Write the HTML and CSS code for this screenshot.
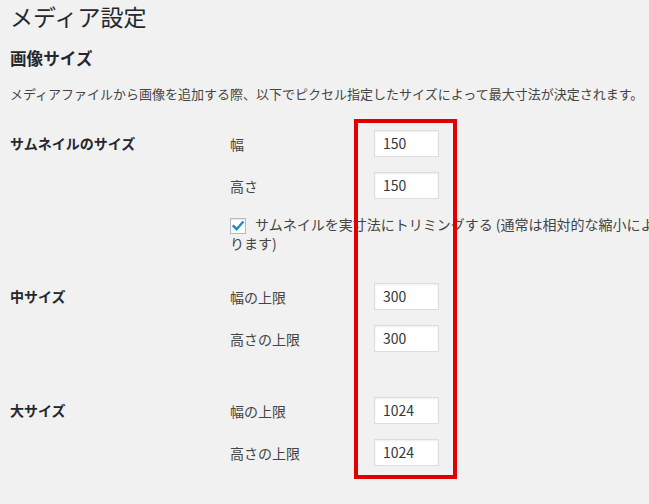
FILE: index.html
```html
<!DOCTYPE html>
<html lang="ja">
<head>
<meta charset="utf-8">
<title>メディア設定</title>
<link rel="stylesheet" href="styles.css">
</head>
<body>
<div class="wrap">
  <h1 class="title">メディア設定</h1>
  <h2 class="subtitle">画像サイズ</h2>
  <p class="desc">メディアファイルから画像を追加する際、以下でピクセル指定したサイズによって最大寸法が決定されます。</p>

  <section class="group group-thumb">
    <div class="th">サムネイルのサイズ</div>
    <div class="fields">
      <div class="field"><span class="label">幅</span><span class="input">150</span></div>
      <div class="field"><span class="label">高さ</span><span class="input">150</span></div>
      <div class="check">
        <span class="box"><svg width="14" height="14" viewBox="0 0 14 14"><path d="M2.6 7.2 L5.6 10.2 L11.6 3.4" fill="none" stroke="#1e8cbe" stroke-width="2.4" stroke-linecap="square"/></svg></span><span class="check-text">サムネイルを実寸法にトリミングする (通常は相対的な縮小によります)</span>
      </div>
    </div>
  </section>

  <section class="group group-medium">
    <div class="th">中サイズ</div>
    <div class="fields">
      <div class="field"><span class="label">幅の上限</span><span class="input">300</span></div>
      <div class="field"><span class="label">高さの上限</span><span class="input">300</span></div>
    </div>
  </section>

  <section class="group group-large">
    <div class="th">大サイズ</div>
    <div class="fields">
      <div class="field"><span class="label">幅の上限</span><span class="input">1024</span></div>
      <div class="field"><span class="label">高さの上限</span><span class="input">1024</span></div>
    </div>
  </section>

  <div class="highlight"></div>
</div>
</body>
</html>
```
FILE: styles.css
```css
html, body {
  margin: 0;
  padding: 0;
  background: #f1f1f1;
}
body {
  font-family: "Noto Sans CJK JP", "Noto Sans", sans-serif;
  color: #444;
  overflow: hidden;
  width: 649px;
  height: 504px;
}
.wrap {
  position: relative;
  padding-left: 10px;
  height: 504px;
}
.title {
  margin: 1px 0 0;
  font-size: 23px;
  line-height: 30px;
  font-weight: 400;
  color: #23282d;
}
.subtitle {
  margin: 15px 0 0;
  font-size: 16.6px;
  line-height: 24px;
  font-weight: 700;
  color: #23282d;
}
.desc {
  margin: 14px 0 0;
  font-size: 13px;
  line-height: 20px;
  color: #444;
  white-space: nowrap;
}
.group {
  display: flex;
}
.group-thumb { margin-top: 26px; }
.group-medium { margin-top: 31px; }
.group-large { margin-top: 45px; }
.th {
  width: 220px;
  flex: none;
  font-size: 14px;
  line-height: 27px;
  font-weight: 700;
  color: #23282d;
}
.fields {
  display: flex;
  flex-direction: column;
  gap: 15px;
}
.field {
  display: flex;
  align-items: center;
  height: 27px;
}
.label {
  width: 144px;
  font-size: 14px;
  color: #444;
}
.input {
  box-sizing: border-box;
  width: 65px;
  height: 27px;
  padding-left: 8px;
  background: #fff;
  border: 1px solid #ddd;
  box-shadow: inset 0 1px 2px rgba(0,0,0,.07);
  font-size: 14px;
  line-height: 25px;
  color: #32373c;
}
.check {
  margin-top: 1px;
  width: 432px;
  font-size: 14px;
  line-height: 18px;
  color: #444;
}
.box {
  display: inline-flex;
  align-items: center;
  justify-content: center;
  box-sizing: border-box;
  width: 16px;
  height: 16px;
  margin-right: 9px;
  vertical-align: -3px;
  background: #fff;
  border: 1px solid #b4b9be;
  box-shadow: inset 0 1px 2px rgba(0,0,0,.1);
}
.highlight {
  position: absolute;
  left: 354px;
  top: 118px;
  width: 103px;
  height: 360px;
  box-sizing: border-box;
  border: 4px solid #e00000;
}
```
